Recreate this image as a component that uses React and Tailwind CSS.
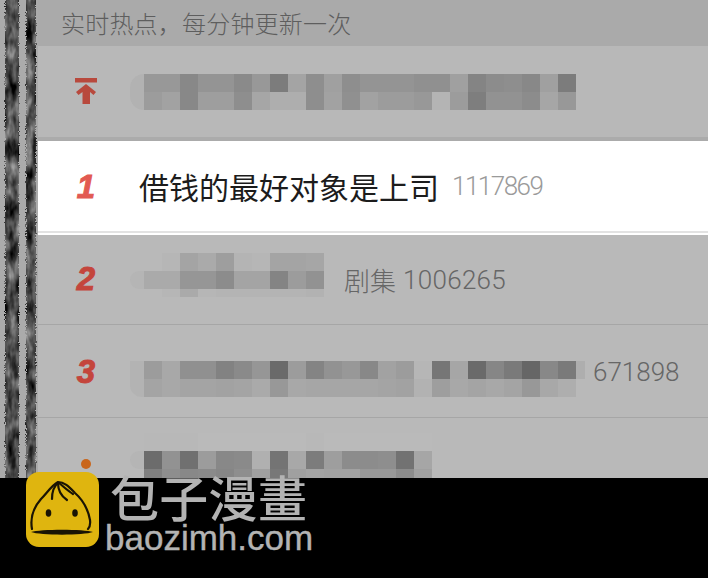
const g = (v) => (v ? `#${v}${v}${v}` : "transparent");

function Mosaic({ rows }) {
  return (
    <div className="flex flex-col">
      {rows.map((row, i) => (
        <div key={i} className="flex" style={{ height: row.h }}>
          {row.c.map((v, j) => (
            <div key={j} className="w-[18px] shrink-0" style={{ background: g(v) }} />
          ))}
        </div>
      ))}
    </div>
  );
}

const Pill = ({ className }) => <div className={`w-[14px] -ml-[4px] shrink-0 bg-[#b2b2b2] ${className}`} />;

const num = "font-['Roboto','Liberation_Sans',sans-serif] font-light text-[26px] leading-none";
const rankText = "font-['Liberation_Sans',sans-serif] font-bold italic text-[33px] leading-none [-webkit-text-stroke:1px_currentColor]";

const Rank = ({ children }) => <div className="w-[96px] shrink-0 h-full flex items-center justify-center">{children}</div>;

const bar1 = [
  { h: 18, c: ["98","98","88","94","94","8a","98","7c","a4","8e","a0","8e","94","94","94","90","90","a0","84","8c","8e","88","a0","7c"] },
  { h: 18, c: ["9c","a2","88","9e","9e","8e","a6","ae","ae","8e","a2","90","a2","9c","9c","98","b4","9c","7e","92","92","8c","a6","98"] },
];
const bar2 = [
  { h: 18, c: [null,"b6","a4","aa","9e","b4","b6","a4","a4","a6"] },
  { h: 18, c: ["aa","aa","96","96","8c","a4","a4","84","9c","92"] },
  { h: 8, c: [null,"b6","aa","b6","b4","b4","b4","b4","b4","b2"] },
];
const bar3 = [
  { h: 18, c: ["9c","a8","90","90","82","8a","96","6a","9c","84","92","98","88","a2","9c","b6","76","a6","6a","86","7a","66","88","7a"] },
  { h: 18, c: ["a4","a8","a4","a4","a2","a4","aa","98","a8","a6","a6","a6","a6","a4","a2","b2","9e","a8","a4","a8","a4","98","a8","ae"] },
];
const bar4 = [
  { h: 18, c: ["b8","b8","b8","ba","ba","ba","ba","ba","ba","b8","ba","ba","ba","ba","ba","ba"] },
  { h: 18, c: ["6c","92","70","9c","88","8a","b0","74","a8","7c","9e","8c","8c","8e","72","a6"] },
  { h: 9, c: ["80","8e","88","8a","86","8e","a0","78","a0","a4","a2","a2","98","98","8c","a0"] },
];

function Stripes() {
  return (
    <svg width="38" height="478" className="block shrink-0 bg-[#ababab]">
      <defs>
        <filter id="rough" x="-40%" y="0" width="180%" height="100%" colorInterpolationFilters="sRGB">
          <feTurbulence type="fractalNoise" baseFrequency="0.95 0.9" numOctaves="1" seed="4" result="edge" />
          <feDisplacementMap in="SourceGraphic" in2="edge" scale="5" xChannelSelector="R" yChannelSelector="G" result="d" />
          <feTurbulence type="fractalNoise" baseFrequency="0.12 0.05" numOctaves="3" seed="9" result="n" />
          <feColorMatrix in="n" type="matrix" values="0.9 0 0 0 -0.15  0.9 0 0 0 -0.15  0.9 0 0 0 -0.15  0 0 0 0 1" result="t" />
          <feComposite in="t" in2="d" operator="in" />
        </filter>
      </defs>
      <g filter="url(#rough)">
        <rect x="5" y="-10" width="14" height="500" fill="#000" />
        <rect x="26" y="-10" width="10" height="500" fill="#000" />
      </g>
    </svg>
  );
}

function PinIcon() {
  return (
    <svg width="22" height="27" viewBox="0 0 22 27" fill="#b8493d">
      <rect x="0" y="0" width="22" height="4.5" />
      <path d="M11 6 L21 14 L18.5 17 L15 14 L15 26 L7.5 26 L7.5 14 L3.5 17 L1 14 Z" />
    </svg>
  );
}

function Logo() {
  return (
    <svg width="73" height="75" viewBox="0 0 73 75" className="shrink-0 block">
      <rect width="73" height="75" rx="13" fill="#dfb50f" />
      <g fill="none" stroke="#1a1404" strokeWidth="2.2" strokeLinecap="round">
        <path d="M6 57 C4 46 8 35 15 27 C21 21 25 14 32 10 C39 10 44 16 49 21 C57 28 62 37 64 48 C64.5 52 64 55 62 57" />
        <path d="M32 11 C27 15 26 20 26 27" />
        <path d="M32 11 C32 17 35 24 41 28" />
        <path d="M33 11 C38 15 42 19 47 22" />
      </g>
      <path d="M5 60 C14 57 58 57 67 60 C58 63.5 14 63.5 5 60 Z" fill="#1a1404" />
      <ellipse cx="22.5" cy="41" rx="2.8" ry="3.8" fill="#1a1404" />
      <ellipse cx="49" cy="41" rx="2.8" ry="3.8" fill="#1a1404" />
    </svg>
  );
}

export default function App() {
  return (
    <div className="w-[708px] h-[578px] overflow-hidden flex flex-col bg-black font-['Liberation_Sans','Noto_Sans_CJK_SC',sans-serif]">
      <div className="h-[478px] shrink-0 flex overflow-hidden">
        <Stripes />
        <div className="flex-1 min-w-0 flex flex-col">
          <div className="h-[46px] shrink-0 bg-[#aaaaaa] pl-[23px] flex items-center text-[24px] leading-none tracking-[0.2px] text-[#5e5e5e] font-['Noto_Sans_CJK_SC',sans-serif] font-light whitespace-nowrap">
            实时热点，每分钟更新一次
          </div>

          <div className="h-[91px] shrink-0 bg-[#b8b8b8] flex items-start">
            <Rank><PinIcon /></Rank>
            <Pill className="h-[36px] mt-[28px] rounded-l-full" />
            <div className="pt-[28px]"><Mosaic rows={bar1} /></div>
          </div>
          <div className="h-[4px] shrink-0 bg-[#ababab]" />

          <div className="h-[92px] shrink-0 bg-white flex items-center border-b-2 border-[#e2e2e2]">
            <Rank><span className={`${rankText} text-[#e25a52]`}>1</span></Rank>
            <span className="ml-[5px] text-[30px] leading-none text-[#1c1c1c] font-['Noto_Sans_CJK_SC',sans-serif] font-normal whitespace-nowrap">借钱的最好对象是上司</span>
            <span className={`${num} ml-[13px] text-[#9a9a9a] tracking-[-1.5px]`}>1117869</span>
          </div>
          <div className="h-[2px] shrink-0 bg-white" />

          <div className="h-[90px] shrink-0 bg-[#b9b9b9] flex items-start border-b border-[#a6a6a6]">
            <Rank><span className={`${rankText} text-[#c4453c] -mt-[2px]`}>2</span></Rank>
            <Pill className="h-[18px] mt-[36px] rounded-l-full opacity-60" />
            <div className="pt-[18px]"><Mosaic rows={bar2} /></div>
            <span className="ml-[20px] self-center text-[26px] leading-none text-[#666666] font-['Noto_Sans_CJK_SC',sans-serif] font-light whitespace-nowrap">剧集</span>
            <span className={`${num} ml-[7px] self-center tracking-[0.3px] text-[#666666]`}>1006265</span>
          </div>

          <div className="h-[93px] shrink-0 bg-[#b9b9b9] flex items-start border-b border-[#a6a6a6]">
            <Rank><span className={`${rankText} text-[#c4453c]`}>3</span></Rank>
            <Pill className="h-[36px] mt-[36px] rounded-bl-[12px] opacity-80" />
            <div className="pt-[36px]"><Mosaic rows={bar3} /></div>
            <div className="w-[9px] h-[18px] mt-[36px] shrink-0 bg-[#aeaeae]" />
            <span className={`${num} ml-[8px] self-center mt-[2px] text-[#666666]`}>671898</span>
          </div>

          <div className="h-[92px] shrink-0 bg-[#b9b9b9] flex items-start">
            <Rank><span className="block w-[10px] h-[10px] rounded-full bg-[#c9661c]" /></Rank>
            <Pill className="h-[18px] mt-[33px] rounded-l-full opacity-60" />
            <div className="pt-[15px]"><Mosaic rows={bar4} /></div>
          </div>
        </div>
      </div>

      <div className="flex-1 bg-black flex items-start pl-[26px]">
        <div className="-mt-[6px]"><Logo /></div>
        <div className="ml-[6px] -mt-[5px] flex flex-col text-[#b3b3b3]">
          <span className="ml-[5px] h-[46px] text-[49px] leading-[46px] tracking-[0.3px] font-['Noto_Sans_CJK_TC',sans-serif] font-medium whitespace-nowrap">包子漫畫</span>
          <span className="mt-[4px] h-[30px] text-[35px] leading-[30px] [-webkit-text-stroke:0.4px_currentColor] font-['Liberation_Sans',sans-serif] whitespace-nowrap">baozimh.com</span>
        </div>
      </div>
    </div>
  );
}
